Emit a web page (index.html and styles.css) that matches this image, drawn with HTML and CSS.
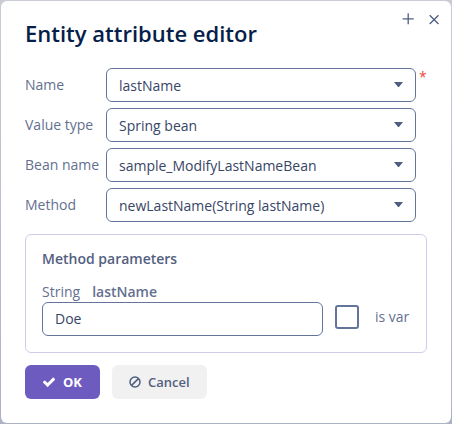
FILE: index.html
```html
<!DOCTYPE html>
<html lang="en">
<head>
<meta charset="utf-8">
<title>Entity attribute editor</title>
<link rel="stylesheet" href="styles.css">
</head>
<body>
<main class="dialog">
  <header class="header">
    <h1>Entity attribute editor</h1>
    <div class="tools">
      <svg width="12" height="12" viewBox="0 0 12 12" aria-label="Maximize"><path d="M6.2 .3v11M.7 5.8h11"/></svg>
      <svg width="12" height="12" viewBox="0 0 12 12" aria-label="Close"><path d="M1.7 2.2l8.8 8.8M10.5 2.2l-8.8 8.8"/></svg>
    </div>
  </header>
  <section class="form">
    <div class="row"><label>Name</label><div class="field"><span>lastName</span><i class="arrow"></i></div><span class="required">*</span></div>
    <div class="row"><label>Value type</label><div class="field"><span>Spring bean</span><i class="arrow"></i></div></div>
    <div class="row"><label>Bean name</label><div class="field"><span>sample_ModifyLastNameBean</span><i class="arrow"></i></div></div>
    <div class="row"><label>Method</label><div class="field"><span>newLastName(String lastName)</span><i class="arrow"></i></div></div>
  </section>
  <section class="group">
    <h2>Method parameters</h2>
    <div class="param"><span>String</span><b>lastName</b></div>
    <div class="param-row">
      <div class="field"><span>Doe</span></div>
      <i class="checkbox"></i>
      <span class="check-label">is var</span>
    </div>
  </section>
  <footer class="actions">
    <button class="btn primary"><svg width="14" height="14" viewBox="0 0 1792 1792"><path d="M1671 566q0 40-28 68l-724 724-136 136q-28 28-68 28t-68-28l-136-136-362-362q-28-28-28-68t28-68l136-136q28-28 68-28t68 28l294 295 656-657q28-28 68-28t68 28l136 136q28 28 28 68z"/></svg><span>OK</span></button>
    <button class="btn cancel"><svg class="ban" width="12" height="12" viewBox="0 0 12 12"><circle cx="6" cy="6" r="5"/><path d="M2.6 9.4l6.8-6.8"/></svg><span>Cancel</span></button>
  </footer>
</main>
</body>
</html>
```
FILE: styles.css
```css
* { box-sizing: border-box; }
body {
  margin: 0;
  padding: 1px;
  height: 424px;
  overflow: hidden;
  background: linear-gradient(#c9ccd5, #bbbfcd 50%, #adb3c3);
  font: 14px/20px "Open Sans", "Noto Sans", sans-serif;
  color: #64708f;
}
.dialog {
  width: 450px;
  height: 422px;
  padding: 0 24px;
  border-radius: 6px;
  background: #fff;
}
.header { display: flex; justify-content: space-between; height: 67px; }
h1 {
  margin: 16px 0 0;
  font-size: 22px;
  line-height: 32px;
  font-weight: 600;
  color: #061e4a;
}
.tools { display: flex; gap: 14px; margin: 12px -13px 0 0; }
.tools svg { fill: none; stroke: #4f5d80; stroke-width: 1.3; }
.form { display: flex; flex-direction: column; gap: 6px; }
.row { display: flex; }
.row label { width: 81px; padding-top: 7px; white-space: nowrap; }
.field {
  display: flex;
  justify-content: space-between;
  width: 310px;
  height: 34px;
  padding: 7px 12px 0;
  border: 1px solid #64749a;
  border-radius: 6px;
  color: #374566;
}
.arrow {
  width: 9px;
  height: 5px;
  margin-top: 6px;
  background: #4f5d80;
  clip-path: polygon(0 0, 100% 0, 55% 100%, 45% 100%);
}
.required { margin-left: 3px; line-height: 18px; color: #ed473b; }
.group {
  width: 402px;
  height: 119px;
  margin-top: 12px;
  padding: 14px 16px 0;
  border: 1px solid #d0cbea;
  border-radius: 6px;
}
h2 { margin: 0; font-size: 14px; line-height: 20px; font-weight: 600; color: #536080; }
.param { display: flex; gap: 12px; height: 20px; margin-top: 13px; }
.param b { font-weight: 600; }
.param-row { display: flex; align-items: center; }
.param-row .field { width: 281px; padding-top: 6px; }
.checkbox {
  width: 24px;
  height: 24px;
  margin: -4px 16px 0 12px;
  border: 2px solid #64749a;
  border-radius: 3px;
}
.check-label { margin-top: -4px; }
.actions { display: flex; gap: 12px; margin-top: 12px; }
.btn {
  display: flex;
  align-items: center;
  height: 34px;
  padding: 0;
  border: 0;
  border-radius: 6px;
  font: 600 13px/20px "Open Sans", "Noto Sans", sans-serif;
}
.primary { width: 75px; padding-left: 17px; gap: 7px; background: #6e5bc0; color: #fff; font-weight: 700; }
.primary svg { fill: #fff; }
.cancel { width: 95px; padding-left: 17px; gap: 7px; background: #f1f1f1; color: #536080; }
.ban { fill: none; stroke: #4f5d80; stroke-width: 1.5; }
```
